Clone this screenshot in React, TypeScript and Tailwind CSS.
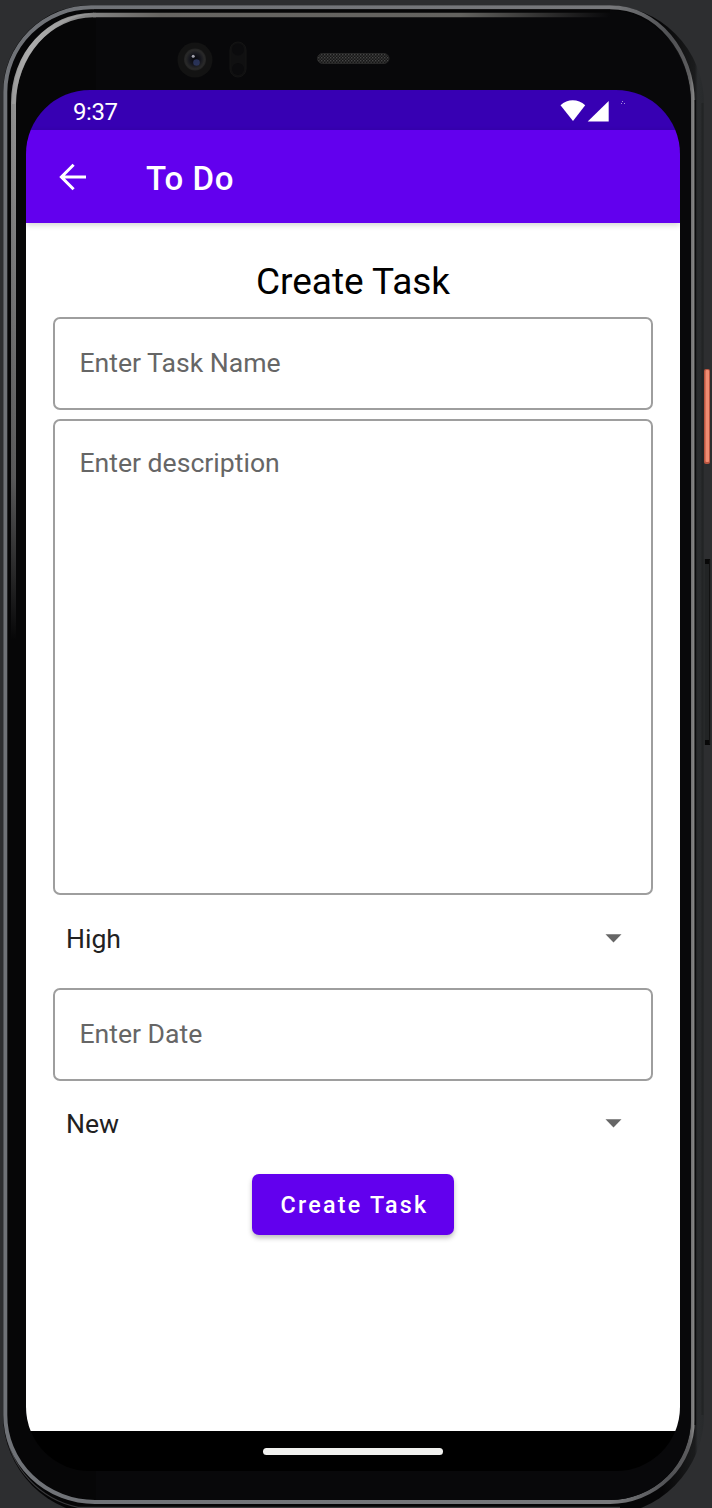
import type { ReactNode } from "react";

function DeviceFrame() {
  return (
    <svg className="absolute inset-0" width="712" height="1508" viewBox="0 0 712 1508" fill="none" aria-hidden="true">
      <defs>
        <linearGradient id="body" x1="0" y1="0" x2="712" y2="0" gradientUnits="userSpaceOnUse">
          <stop offset="0" stopColor="#060607" />
          <stop offset="0.93" stopColor="#060607" />
          <stop offset="0.976" stopColor="#1b1c1d" />
          <stop offset="0.98" stopColor="#2b2d2f" />
          <stop offset="1" stopColor="#242627" />
        </linearGradient>
        <linearGradient id="rim" x1="0" y1="0" x2="712" y2="0" gradientUnits="userSpaceOnUse">
          <stop offset="0" stopColor="#6f7277" />
          <stop offset="0.86" stopColor="#77787b" />
          <stop offset="0.94" stopColor="#505154" />
          <stop offset="0.968" stopColor="#5c5c5e" />
          <stop offset="0.974" stopColor="#858585" />
        </linearGradient>
        <linearGradient id="sheen" x1="11" y1="0" x2="610" y2="0" gradientUnits="userSpaceOnUse">
          <stop offset="0" stopColor="#8a8a8a" />
          <stop offset="0.03" stopColor="#b0b0b0" />
          <stop offset="0.12" stopColor="#858585" />
          <stop offset="0.25" stopColor="#676562" />
          <stop offset="0.75" stopColor="#63625f" />
          <stop offset="1" stopColor="#63625f" stopOpacity="0" />
        </linearGradient>
        <linearGradient id="sheenFade" x1="0" y1="100" x2="0" y2="640" gradientUnits="userSpaceOnUse">
          <stop offset="0" stopColor="#060607" stopOpacity="0" />
          <stop offset="0.7" stopColor="#060607" stopOpacity="0.4" />
          <stop offset="1" stopColor="#060607" />
        </linearGradient>
        <radialGradient id="lens" cx="0.5" cy="0.5" r="0.5">
          <stop offset="0" stopColor="#05060c" />
          <stop offset="0.5" stopColor="#15161d" />
          <stop offset="0.85" stopColor="#292929" />
          <stop offset="1" stopColor="#222222" />
        </radialGradient>
        <pattern id="mesh" width="3" height="3" patternUnits="userSpaceOnUse">
          <rect width="3" height="3" fill="#161616" />
          <rect width="1.4" height="1.4" fill="#464646" />
          <rect x="1.5" y="1.5" width="1.4" height="1.4" fill="#3a3a3a" />
        </pattern>
      </defs>

      <path d="M3 92 A88 87 0 0 1 91 5 H606 A98 98 0 0 1 704 103 V1415 A100 100 0 0 1 604 1515 H103 A100 100 0 0 1 3 1415 Z" fill="url(#body)" />
      <path d="M5.5 1430 A92 92 0 0 0 78 1507.3 H620" stroke="#39393b" strokeWidth="1.2" />
      <path d="M702.5 103 V1415" stroke="#222425" strokeWidth="2" />
      <path d="M5.3 92 A86 85 0 0 1 91 7.3 H610 C658 7.3 692.8 52 692.8 103 V1420 A83 82 0 0 1 610 1502 H95 A89.7 87 0 0 1 5.3 1415 Z" stroke="url(#rim)" strokeWidth="4" />
      <path d="M11 640 V103 A82 90 0 0 1 93 12.7 H610 V17.3 H93 A77 87 0 0 0 16 104 V640 Z" fill="url(#sheen)" />
      <path d="M12 104 A79 89 0 0 1 93 14 A84 94 0 0 0 15.5 104 Z" fill="#aaaaaa" opacity="0.5" />
      <rect x="10" y="100" width="7" height="560" fill="url(#sheenFade)" />
      <path d="M610 10 C656 11 691 55 691 103 V1419 A81 81 0 0 1 610 1500 H96 V10 Z" fill="#08080a" />
      <rect x="94" y="9.5" width="516" height="3" fill="#060607" />
      <path d="M93 15 H610" stroke="url(#sheen)" strokeWidth="4.5" />
      <path d="M695.3 100 V1425" stroke="#0b0c0d" strokeWidth="1.5" />

      <circle cx="195" cy="60" r="17.5" fill="#131313" />
      <circle cx="195" cy="59.5" r="11" fill="url(#lens)" />
      <circle cx="196.5" cy="62.5" r="3.3" fill="#303b66" opacity="0.8" />
      <circle cx="193.2" cy="56.3" r="1.5" fill="#a2a2ad" />
      <rect x="230" y="42" width="16" height="35" rx="8" fill="#101011" stroke="#141414" />
      <circle cx="238" cy="49.5" r="6" fill="#0b0b0d" />
      <circle cx="238" cy="69" r="6" fill="#0b0b0d" />
      <rect x="317.5" y="53.5" width="71.5" height="10" rx="5" fill="url(#mesh)" stroke="#272727" />

      <rect x="704" y="369" width="6" height="95" rx="2" fill="#b95540" />
      <rect x="705.5" y="370" width="3.5" height="92" rx="1" fill="#f08c72" />
      <rect x="704.5" y="559" width="6" height="186" fill="#222425" />
      <rect x="705" y="559" width="5" height="5" fill="#080808" />
      <rect x="705" y="740" width="5" height="5" fill="#080808" />
      <path d="M709.5 560 V744" stroke="#111" />
    </svg>
  );
}

function StatusBar() {
  return (
    <div className="flex h-10 shrink-0 items-center justify-between bg-[#3700b3] pl-[47px] pr-[54px] text-white">
      <span className="pt-[3px] text-[24px] leading-7 tracking-[-0.4px]">9:37</span>
      <svg width="68" height="24" viewBox="0 0 68 24" fill="currentColor" aria-hidden="true">
        <path d="M2.5 7.2 C9.5 0.6 20 0.6 27.2 7.2 L15 23 Z" />
        <path d="M50.7 3 V23.6 H29.7 Z" />
        <g opacity="0.55">
          <rect x="64" y="3" width="1" height="1" />
          <rect x="63" y="5" width="1" height="1" />
          <rect x="66" y="5" width="1" height="1" />
        </g>
      </svg>
    </div>
  );
}

function AppBar() {
  return (
    <header className="relative flex h-[93px] shrink-0 items-center bg-[#6200ee] pl-[33px] text-white shadow-[0_2px_6px_rgba(0,0,0,0.18)]">
      <button aria-label="Back">
        <svg width="28" height="28" viewBox="0 0 28 28" fill="none" stroke="currentColor" strokeWidth="3" aria-hidden="true">
          <path d="M27 14 H3 M14.6 1.8 L2.4 14 L14.6 26.2" />
        </svg>
      </button>
      <h1 className="ml-[59px] mt-[5px] text-[33px] font-medium leading-10 tracking-[0.6px]">To Do</h1>
    </header>
  );
}

function OutlinedField({ label, className }: { label: string; className: string }) {
  return (
    <div className={`rounded-[7px] border-2 border-[#9e9e9e] px-[24.4px] text-[26.6px] leading-8 text-[#666666] ${className}`}>
      {label}
    </div>
  );
}

function Spinner({ children, className }: { children: ReactNode; className: string }) {
  return (
    <div className={`flex h-10 items-center justify-between pl-[13px] pr-[31px] text-[26.6px] text-[#212121] ${className}`}>
      <span className="pt-[2px]">{children}</span>
      <svg width="17" height="9" viewBox="0 0 17 9" fill="#666666" aria-hidden="true">
        <path d="M0.5 0.3 H16.5 L8.5 8.4 Z" />
      </svg>
    </div>
  );
}

export default function App() {
  return (
    <div className="relative h-[1508px] w-[712px] overflow-hidden bg-[#2d2e30] pl-[26px] pt-[90px] font-[Roboto,sans-serif]">
      <DeviceFrame />
      <div className="relative flex h-[1381px] w-[654px] flex-col overflow-hidden rounded-[64px]">
        <StatusBar />
        <AppBar />
        <main className="flex flex-1 flex-col bg-white px-[27px] pt-[37px]">
          <h2 className="text-center text-[37px] leading-[44px] text-black">Create Task</h2>
          <OutlinedField label="Enter Task Name" className="mt-[13px] h-[93px] pt-[28px]" />
          <OutlinedField label="Enter description" className="mt-[9px] h-[476px] pt-[26px]" />
          <Spinner className="mt-[23px]">High</Spinner>
          <OutlinedField label="Enter Date" className="mt-[30px] h-[93px] pt-[28px]" />
          <Spinner className="mt-[22px]">New</Spinner>
          <button className="mt-[31px] h-[61px] w-[202px] self-center rounded-[7px] bg-[#6200ee] pl-[3px] pt-[2px] text-[23.3px] font-medium tracking-[2.25px] text-white shadow-[0_3px_5px_rgba(0,0,0,0.26)]">
            Create Task
          </button>
        </main>
        <nav className="flex h-10 shrink-0 items-center justify-center bg-black">
          <div className="h-[7px] w-[180px] rounded-full bg-[#f1f1ef]" />
        </nav>
      </div>
    </div>
  );
}
